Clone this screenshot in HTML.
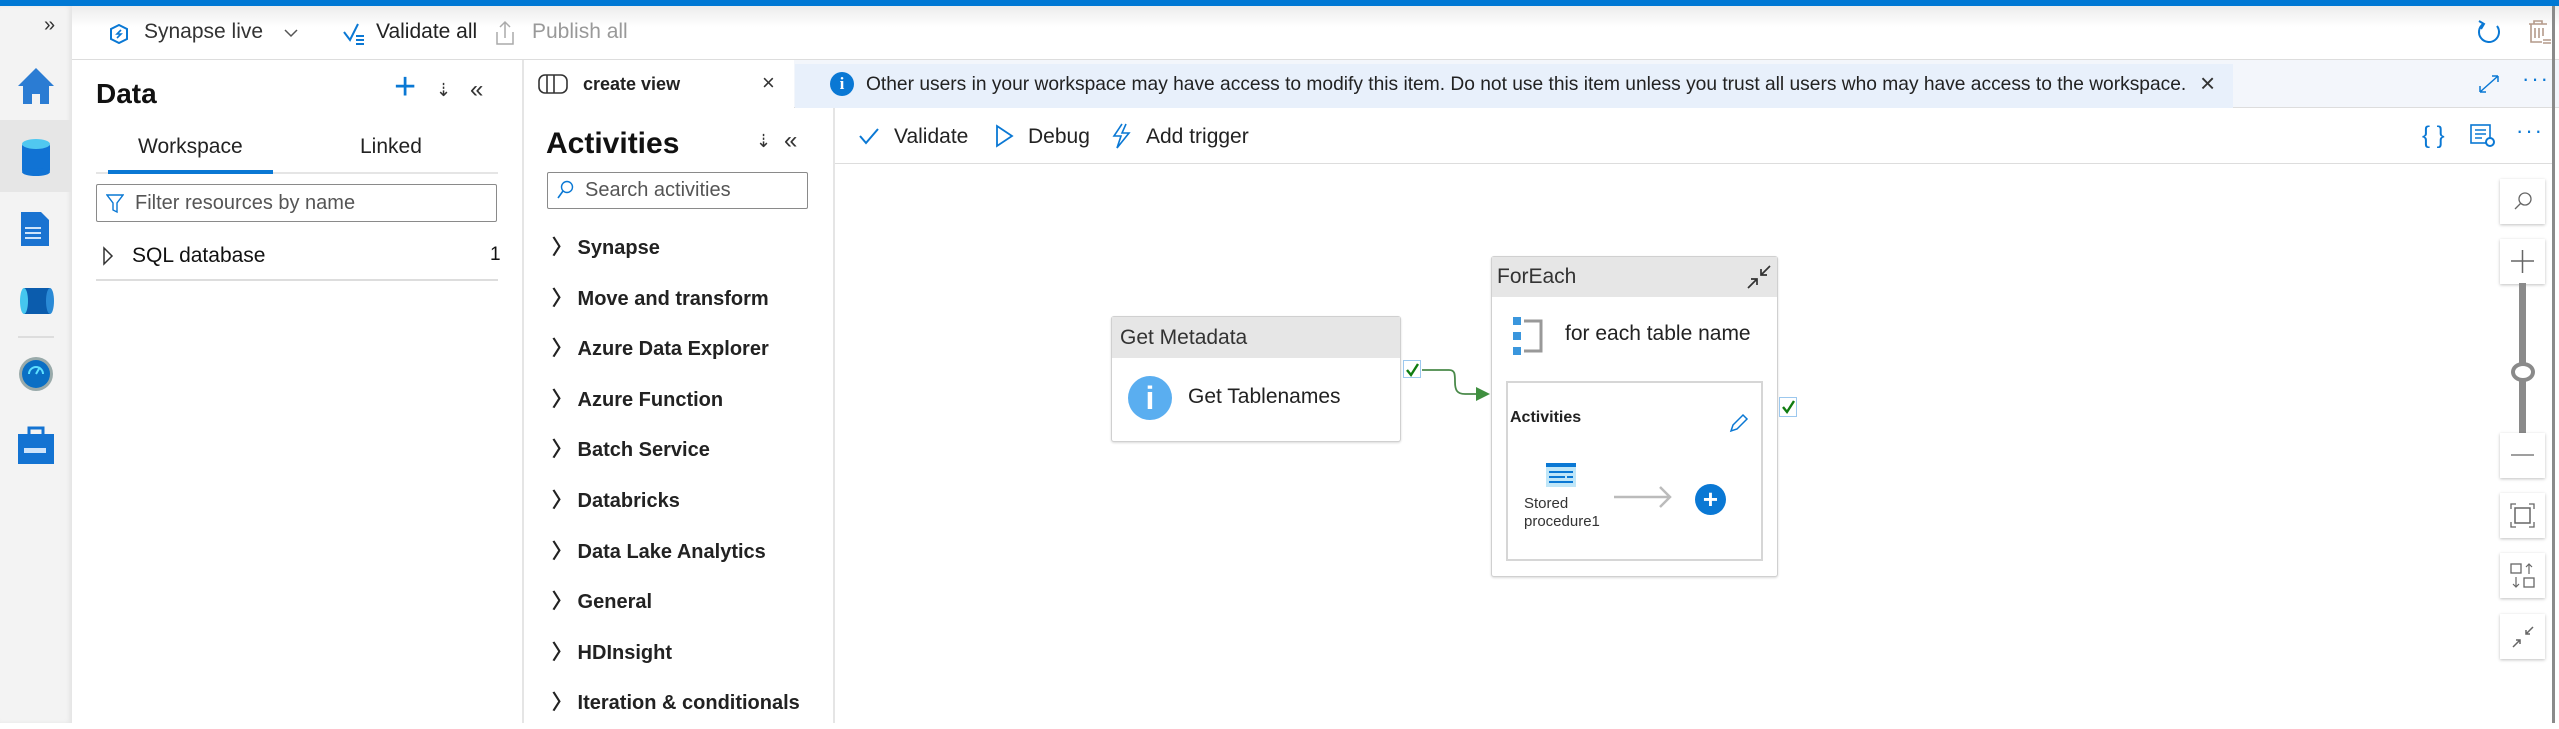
<!DOCTYPE html>
<html><head><meta charset="utf-8"><style>
*{box-sizing:border-box;margin:0;padding:0}
body{width:2559px;height:723px;overflow:hidden;background:#fff;font-family:"Liberation Sans",sans-serif;color:#222;position:relative}
.a{position:absolute}
.t{position:absolute;white-space:nowrap}
.zb{position:absolute;left:2500px;width:45px;height:45px;background:#fff;box-shadow:0 1px 3px rgba(0,0,0,.25)}
</style></head><body>
<div class="a" style="left:0;top:0;width:2559px;height:6px;background:#0078d4"></div>
<div class="a" style="left:72px;top:6px;width:2487px;height:54px;background:linear-gradient(#ececec,#fff 40%);border-bottom:1px solid #ddd"></div>
<div class="a" style="left:0;top:6px;width:72px;height:717px;background:#f3f3f3;box-shadow:inset -3px 0 4px rgba(0,0,0,.06)"></div>
<div class="t" style="left:44px;top:14px;font-size:20px;color:#333">»</div>
<svg class="a" style="left:16px;top:66px" width="40" height="40"><path d="M20 2 L38 20 H33 V38 H24 V28 H16 V38 H7 V20 H2 Z" fill="#2b7cd3"/></svg>
<div class="a" style="left:0;top:120px;width:72px;height:72px;background:#e6e6e6"></div>
<svg class="a" style="left:20px;top:138px" width="32" height="38"><rect x="2" y="6" width="28" height="28" rx="2" fill="#1173d4"/><ellipse cx="16" cy="6" rx="14" ry="5" fill="#50c8f0"/><ellipse cx="16" cy="34" rx="14" ry="4" fill="#1173d4"/></svg>
<svg class="a" style="left:19px;top:210px" width="34" height="38"><path d="M2 2 H22 L30 10 V36 H2 Z" fill="#1a73d1"/><path d="M6 18H22M6 23H22M6 28H22" stroke="#cfe4fa" stroke-width="2"/></svg>
<svg class="a" style="left:18px;top:286px" width="38" height="30"><rect x="6" y="2" width="26" height="26" fill="#0b5cad"/><ellipse cx="6" cy="15" rx="4" ry="13" fill="#45c6ef"/><ellipse cx="32" cy="15" rx="4" ry="13" fill="#2a8ad6"/></svg>
<div class="a" style="left:18px;top:336px;width:36px;height:2px;background:#ddd"></div>
<svg class="a" style="left:17px;top:355px" width="38" height="38"><circle cx="19" cy="19" r="17" fill="#9aa"/><circle cx="19" cy="19" r="14" fill="#0a6fc4"/><path d="M12 19a7 7 0 0 1 14 0M19 19l4-7" stroke="#5ee0ff" stroke-width="2" fill="none"/></svg>
<svg class="a" style="left:18px;top:426px" width="36" height="38"><rect x="0" y="8" width="36" height="30" fill="#1373d2"/><rect x="11" y="2" width="14" height="8" fill="none" stroke="#1373d2" stroke-width="3"/><rect x="6" y="22" width="22" height="5" fill="#cfe4fa"/></svg>
<svg class="a" style="left:110px;top:24px" width="18" height="20"><path d="M9 1L17 5V15L9 19L1 15V5Z" fill="none" stroke="#0a78d4" stroke-width="2"/><path d="M11 6L7 10H11L7 14" stroke="#0a78d4" stroke-width="1.6" fill="none"/></svg>
<div class="t" style="left:144px;top:20px;font-size:21px;color:#333">Synapse live</div>
<svg class="a" style="left:284px;top:28px" width="14" height="10"><path d="M1 2L7 8L13 2" stroke="#555" fill="none" stroke-width="1.5"/></svg>
<svg class="a" style="left:342px;top:22px" width="24" height="24"><path d="M2 10L8 18L16 2" stroke="#0a78d4" fill="none" stroke-width="2"/><path d="M14 14h8M14 18h8M14 22h8" stroke="#0a78d4" stroke-width="2"/></svg>
<div class="t" style="left:376px;top:20px;font-size:21px;color:#222">Validate all</div>
<svg class="a" style="left:494px;top:20px" width="22" height="26"><path d="M3 12V24H19V12M11 2V18M6 7L11 2L16 7" stroke="#aaa" fill="none" stroke-width="1.5"/></svg>
<div class="t" style="left:532px;top:20px;font-size:21px;color:#999">Publish all</div>
<svg class="a" style="left:2475px;top:18px" width="28" height="30"><path d="M22 8A10 10 0 1 1 8 6" stroke="#0a78d4" fill="none" stroke-width="2"/><path d="M4 3L9 6L6 11" stroke="#0a78d4" fill="none" stroke-width="2"/></svg>
<svg class="a" style="left:2526px;top:18px" width="26" height="28"><path d="M3 6H21M8 6V3H16V6M5 6V24H16M9 10V20M13 10V20M17 10V18M17 22H25M17 25H25" stroke="#b49a8a" fill="none" stroke-width="1.6"/></svg>
<div class="a" style="left:522px;top:60px;width:2px;height:663px;background:#e5e5e5"></div>
<div class="t" style="left:96px;top:78px;font-size:28px;font-weight:bold;color:#111">Data</div>
<div class="t" style="left:394px;top:68px;font-size:38px;font-weight:300;color:#0a78d4;line-height:1">+</div>
<div class="t" style="left:436px;top:80px;font-size:18px;color:#333">&#8675;</div>
<div class="t" style="left:470px;top:76px;font-size:24px;color:#333">«</div>
<div class="t" style="left:138px;top:135px;font-size:21px;color:#222">Workspace</div>
<div class="t" style="left:360px;top:135px;font-size:21px;color:#222">Linked</div>
<div class="a" style="left:96px;top:172px;width:402px;height:2px;background:#e5e5e5"></div>
<div class="a" style="left:108px;top:170px;width:165px;height:4px;background:#0a78d4"></div>
<div class="a" style="left:96px;top:184px;width:401px;height:38px;border:1px solid #8a8a8a;border-radius:2px"></div>
<svg class="a" style="left:106px;top:194px" width="18" height="20"><path d="M1 1H17L11 9V18L7 16V9Z" stroke="#0a78d4" fill="none" stroke-width="1.4"/></svg>
<div class="t" style="left:135px;top:192px;font-size:20px;color:#555">Filter resources by name</div>
<svg class="a" style="left:102px;top:246px" width="12" height="20"><path d="M2 2L10 10L2 18Z" stroke="#333" fill="none" stroke-width="1.5"/></svg>
<div class="t" style="left:132px;top:244px;font-size:21px;color:#111">SQL database</div>
<div class="t" style="left:490px;top:244px;font-size:19px;color:#111">1</div>
<div class="a" style="left:96px;top:279px;width:402px;height:2px;background:#ddd"></div>
<div class="a" style="left:524px;top:60px;width:270px;height:48px;background:#fff"></div>
<svg class="a" style="left:538px;top:73px" width="30" height="22"><rect x="1" y="2" width="28" height="18" rx="6" stroke="#333" fill="none" stroke-width="1.6"/><path d="M9 2V20M16 2V20" stroke="#333" stroke-width="1.6"/></svg>
<div class="t" style="left:583px;top:74px;font-size:18px;font-weight:bold;color:#222">create view</div>
<div class="t" style="left:762px;top:70px;font-size:22px;color:#333">×</div>
<div class="a" style="left:794px;top:60px;width:1765px;height:48px;background:#f3f6fb;border-bottom:1px solid #ddd"></div>
<div class="a" style="left:795px;top:64px;width:1438px;height:44px;background:#e8f0fb"></div>
<div class="a" style="left:830px;top:72px;width:24px;height:24px;border-radius:50%;background:#0a78d4;color:#fff;font-size:17px;font-weight:bold;text-align:center;line-height:24px;font-family:'Liberation Serif',serif">i</div>
<div class="t" style="left:866px;top:74px;font-size:19.2px;color:#222">Other users in your workspace may have access to modify this item. Do not use this item unless you trust all users who may have access to the workspace.</div>
<div class="t" style="left:2200px;top:68px;font-size:26px;color:#333">×</div>
<svg class="a" style="left:2478px;top:74px" width="22" height="20"><path d="M2 18L20 2M2 18V12M2 18H8M20 2H14M20 2V8" stroke="#0a78d4" fill="none" stroke-width="1.5"/></svg>
<div class="t" style="left:2522px;top:66px;font-size:22px;color:#0a78d4;letter-spacing:2px">···</div>
<div class="a" style="left:833px;top:108px;width:2px;height:615px;background:#e5e5e5"></div>
<div class="t" style="left:546px;top:127px;font-size:30px;font-weight:bold;color:#111">Activities</div>
<div class="t" style="left:756px;top:131px;font-size:18px;color:#333">&#8675;</div>
<div class="t" style="left:784px;top:127px;font-size:24px;color:#333">«</div>
<div class="a" style="left:547px;top:172px;width:261px;height:37px;border:1px solid #8a8a8a;border-radius:2px"></div>
<svg class="a" style="left:556px;top:180px" width="18" height="22"><circle cx="11" cy="7" r="5.5" stroke="#0a78d4" fill="none" stroke-width="1.4"/><path d="M7 11L2 18" stroke="#0a78d4" stroke-width="1.6"/></svg>
<div class="t" style="left:585px;top:179px;font-size:20px;color:#555">Search activities</div>
<div style="position:absolute;left:552px;top:223px;font-size:20px;font-weight:bold;color:#222;line-height:50.6px">
<div>〉 Synapse</div><div>〉 Move and transform</div><div>〉 Azure Data Explorer</div><div>〉 Azure Function</div><div>〉 Batch Service</div><div>〉 Databricks</div><div>〉 Data Lake Analytics</div><div>〉 General</div><div>〉 HDInsight</div><div>〉 Iteration &amp; conditionals</div>
</div>
<div class="a" style="left:835px;top:163px;width:1718px;height:1px;background:#ddd"></div>
<svg class="a" style="left:858px;top:126px" width="22" height="20"><path d="M2 10L8 17L20 3" stroke="#0a78d4" fill="none" stroke-width="2"/></svg>
<div class="t" style="left:894px;top:125px;font-size:21px;color:#222">Validate</div>
<svg class="a" style="left:994px;top:124px" width="20" height="24"><path d="M3 2L18 12L3 22Z" stroke="#0a78d4" fill="none" stroke-width="1.8"/></svg>
<div class="t" style="left:1028px;top:125px;font-size:21px;color:#222">Debug</div>
<svg class="a" style="left:1110px;top:122px" width="26" height="28"><path d="M12 2L4 14H11L7 26L19 11H12L16 2" stroke="#0a78d4" fill="none" stroke-width="1.6"/></svg>
<div class="t" style="left:1146px;top:125px;font-size:21px;color:#222">Add trigger</div>
<div class="t" style="left:2422px;top:122px;font-size:24px;color:#0a78d4">{ }</div>
<svg class="a" style="left:2470px;top:124px" width="26" height="24"><rect x="1" y="1" width="19" height="18" stroke="#0a78d4" fill="none" stroke-width="1.6"/><path d="M5 6H16M5 10H16M5 14H12" stroke="#0a78d4" stroke-width="1.6"/><circle cx="20" cy="18" r="4" stroke="#0a78d4" fill="#fff" stroke-width="2"/></svg>
<div class="t" style="left:2516px;top:118px;font-size:22px;color:#0a78d4;letter-spacing:2px">···</div>
<div class="a" style="left:2552px;top:6px;width:3px;height:717px;background:#8a8a8a"></div>
<div class="zb" style="top:179px"><svg width="45" height="45"><circle cx="25" cy="20" r="6" stroke="#666" fill="none" stroke-width="1.3"/><path d="M21 24L15 30" stroke="#666" stroke-width="1.3"/></svg></div>
<div class="zb" style="top:239px"><svg width="45" height="45"><path d="M11 22H34M22.5 11V34" stroke="#666" stroke-width="1.5"/></svg></div>
<div class="a" style="left:2519px;top:283px;width:7px;height:150px;background:#8a8a8a"></div>
<div class="a" style="left:2511px;top:362px;width:24px;height:20px;border-radius:50%;border:4px solid #8a8a8a;background:#fff"></div>
<div class="zb" style="top:433px"><svg width="45" height="45"><path d="M11 22H34" stroke="#666" stroke-width="1.3"/></svg></div>
<div class="zb" style="top:493px"><svg width="45" height="45"><path d="M11 16V11H16M29 11H34V16M34 29V34H29M16 34H11V29" stroke="#666" fill="none" stroke-width="1.3"/><rect x="15" y="15" width="15" height="15" stroke="#666" fill="none" stroke-width="1.5"/></svg></div>
<div class="zb" style="top:553px"><svg width="45" height="45"><rect x="11" y="11" width="10" height="9" stroke="#666" fill="none" stroke-width="1.3"/><rect x="24" y="25" width="10" height="9" stroke="#666" fill="none" stroke-width="1.3"/><path d="M29 21V11M26 14L29 11L32 14M16 24V34M13 31L16 34L19 31" stroke="#666" fill="none" stroke-width="1.2"/></svg></div>
<div class="zb" style="top:614px"><svg width="45" height="45"><path d="M13 33L20 26M16 26H20V30M33 13L26 20M26 16V20H30" stroke="#666" fill="none" stroke-width="1.5"/></svg></div>
<div class="a" style="left:1111px;top:316px;width:290px;height:126px;border:1px solid #d0d0d0;border-radius:3px;box-shadow:0 1px 2px rgba(0,0,0,.15);background:#fff"></div>
<div class="a" style="left:1112px;top:317px;width:288px;height:41px;background:#e6e6e6"></div>
<div class="t" style="left:1120px;top:326px;font-size:21px;color:#333">Get Metadata</div>
<div class="a" style="left:1128px;top:376px;width:44px;height:44px;border-radius:50%;background:#5aaef0;color:#fff;font-size:32px;font-weight:bold;text-align:center;line-height:44px">i</div>
<div class="t" style="left:1188px;top:385px;font-size:21px;color:#222">Get Tablenames</div>
<div class="a" style="left:1403px;top:360px;width:18px;height:18px;border:1px solid #9cc8ee;background:#fff"></div>
<svg class="a" style="left:1404px;top:361px" width="18" height="18"><path d="M3 9L7 14L14 3" stroke="#107c10" fill="none" stroke-width="2.4"/></svg>
<svg class="a" style="left:1421px;top:362px" width="72" height="40"><path d="M1 8H28C34 8 34 12 34 20C34 28 36 32 44 32H55" stroke="#4a8a4a" fill="none" stroke-width="1.8"/><path d="M55 25L69 32L55 39Z" fill="#3f8f3f"/></svg>
<div class="a" style="left:1491px;top:256px;width:287px;height:321px;border:1px solid #d0d0d0;border-radius:3px;box-shadow:0 1px 2px rgba(0,0,0,.15);background:#fff"></div>
<div class="a" style="left:1492px;top:257px;width:285px;height:40px;background:#e6e6e6"></div>
<div class="t" style="left:1497px;top:265px;font-size:21px;color:#333">ForEach</div>
<svg class="a" style="left:1745px;top:263px" width="28" height="28"><path d="M3 25L12 16M6 16H12V22M25 3L16 12M16 6V12H22" stroke="#333" fill="none" stroke-width="1.7"/></svg>
<svg class="a" style="left:1512px;top:316px" width="34" height="40"><rect x="1" y="1" width="8" height="8" fill="#3a96dd"/><rect x="1" y="16" width="8" height="8" fill="#3a96dd"/><rect x="1" y="31" width="8" height="8" fill="#3a96dd"/><path d="M12 5H29V35H12" stroke="#999" fill="none" stroke-width="3"/></svg>
<div class="t" style="left:1565px;top:322px;font-size:21px;color:#222">for each table name</div>
<div class="a" style="left:1506px;top:381px;width:257px;height:180px;border:2px solid #d6d6d6"></div>
<div class="t" style="left:1510px;top:409px;font-size:16px;font-weight:bold;color:#222">Activities</div>
<svg class="a" style="left:1728px;top:412px" width="22" height="22"><path d="M3 19L5 13L15 3L19 7L9 17Z" stroke="#0a78d4" fill="none" stroke-width="1.5"/></svg>
<svg class="a" style="left:1546px;top:463px" width="30" height="24"><rect x="0" y="0" width="30" height="24" fill="#bfe6f8"/><rect x="0" y="0" width="30" height="4" fill="#0a78d4"/><path d="M3 9H27M3 14H19M21 14H27M3 19H27" stroke="#0a78d4" stroke-width="2"/></svg>
<div class="t" style="left:1524px;top:495px;font-size:15px;color:#333;line-height:18px">Stored<br>procedure1</div>
<svg class="a" style="left:1612px;top:484px" width="62" height="26"><path d="M2 13H58M48 3L58 13L48 23" stroke="#bbb" fill="none" stroke-width="2.5"/></svg>
<div class="a" style="left:1695px;top:484px;width:31px;height:31px;border-radius:50%;background:#0a78d4;color:#fff;font-size:26px;font-weight:bold;text-align:center;line-height:30px">+</div>
<div class="a" style="left:1779px;top:397px;width:18px;height:20px;border:1px solid #9cc8ee;background:#fff"></div>
<svg class="a" style="left:1780px;top:398px" width="18" height="18"><path d="M3 9L7 14L14 3" stroke="#107c10" fill="none" stroke-width="2.4"/></svg>
</body></html>
